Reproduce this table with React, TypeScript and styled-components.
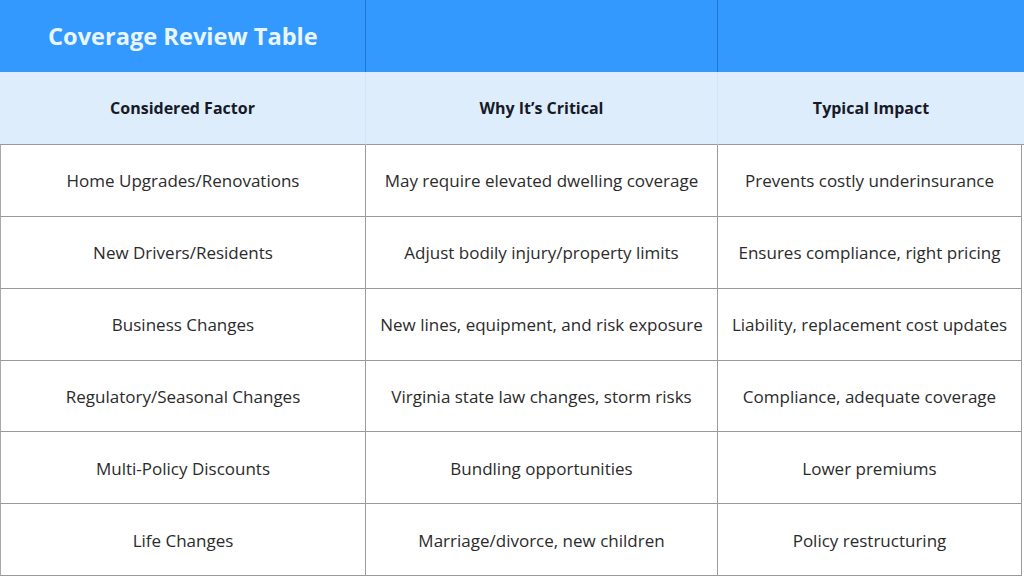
import React from "react";
import styled, { createGlobalStyle } from "styled-components";

const Global = createGlobalStyle`
  html, body { margin: 0; padding: 0; background: #ffffff; }
  #root { width: 1024px; height: 576px; }
`;

const Table = styled.div`
  width: 1024px;
  height: 576px;
  display: grid;
  grid-template-columns: 366px 352px 306px;
  grid-template-rows: 72px 73px repeat(6, 1fr);
  box-sizing: border-box;
  font-family: "Open Sans", "Liberation Sans", sans-serif;
`;

const TitleCell = styled.div<{ $first?: boolean; $last?: boolean }>`
  background: #3399fe;
  display: flex;
  align-items: center;
  padding-left: ${(p) => (p.$first ? "48px" : "0")};
  border-right: ${(p) => (p.$last ? "none" : "1px solid #1f74d6")};
  box-sizing: border-box;
  color: #eaf6ff;
  font-family: "Open Sans", sans-serif;
  font-weight: 700;
  font-size: 23.6px;
  padding-bottom: 1px;
`;

const HeadCell = styled.div<{ $last?: boolean }>`
  background: #deedfc;
  display: flex;
  align-items: center;
  justify-content: center;
  border-right: ${(p) => (p.$last ? "none" : "1px solid #d2e4f6")};
  border-bottom: 1px solid #9a9a9a;
  box-sizing: border-box;
  color: #171a26;
  font-weight: 700;
  font-size: 16px;
`;

const Cell = styled.div<{ $col: number }>`
  background: #ffffff;
  display: flex;
  align-items: center;
  justify-content: center;
  box-sizing: border-box;
  padding-top: 1px;
  border-right: 1px solid #9a9a9a;
  border-left: ${(p) => (p.$col === 0 ? "1px solid #a8a8a8" : "none")};
  border-bottom: 1px solid #9a9a9a;
  margin-right: ${(p) => (p.$col === 2 ? "2px" : "0")};
  color: #2b2b2b;
  font-size: 17px;
  white-space: nowrap;
`;

const rows: [string, string, string][] = [
  ["Home Upgrades/Renovations", "May require elevated dwelling coverage", "Prevents costly underinsurance"],
  ["New Drivers/Residents", "Adjust bodily injury/property limits", "Ensures compliance, right pricing"],
  ["Business Changes", "New lines, equipment, and risk exposure", "Liability, replacement cost updates"],
  ["Regulatory/Seasonal Changes", "Virginia state law changes, storm risks", "Compliance, adequate coverage"],
  ["Multi-Policy Discounts", "Bundling opportunities", "Lower premiums"],
  ["Life Changes", "Marriage/divorce, new children", "Policy restructuring"],
];

const heads = ["Considered Factor", "Why It\u2019s Critical", "Typical Impact"];

export default function App() {
  return (
    <>
      <Global />
      <Table>
        <TitleCell $first>Coverage Review Table</TitleCell>
        <TitleCell />
        <TitleCell $last />
        {heads.map((h, i) => (
          <HeadCell key={h} $last={i === 2}>{h}</HeadCell>
        ))}
        {rows.map((r, ri) =>
          r.map((c, ci) => (
            <Cell key={`${ri}-${ci}`} $col={ci}>
              {c}
            </Cell>
          ))
        )}
      </Table>
    </>
  );
}
